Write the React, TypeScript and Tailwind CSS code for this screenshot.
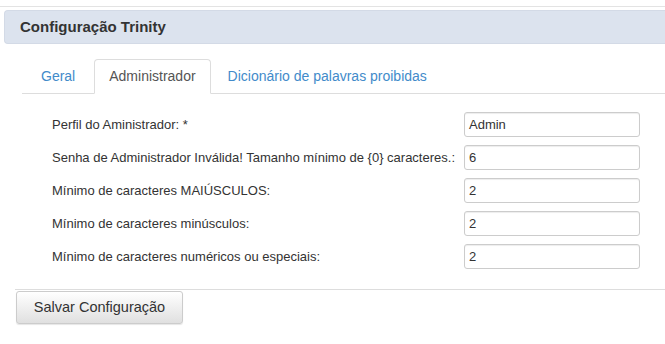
import React from "react";

const rows = [
  { label: "Perfil do Aministrador: *", value: "Admin" },
  { label: "Senha de Administrador Inválida! Tamanho mínimo de {0} caracteres.:", value: "6" },
  { label: "Mínimo de caracteres MAIÚSCULOS:", value: "2" },
  { label: "Mínimo de caracteres minúsculos:", value: "2" },
  { label: "Mínimo de caracteres numéricos ou especiais:", value: "2" },
];

export default function App() {
  return (
    <div className="w-[665px] h-[344px] bg-white overflow-hidden text-[#333] font-['Liberation_Sans',Arial,sans-serif]">
      <div className="mt-[6px] border-t border-[#e3e3e3] pt-[3px] pl-[4px]">
        {/* header */}
        <div className="h-[34px] bg-[#dce3ee] border border-[#d3dae6] rounded-l-[4px] border-r-0 flex items-center pl-[15px]">
          <span className="text-[15px] font-bold">Configuração Trinity</span>
        </div>

        {/* tabs */}
        <div className="mt-[15px] ml-[18px] flex items-end border-b border-[#ddd] h-[35px] text-[14px]">
          <div className="px-[19px] h-[34px] flex items-center text-[#428bca]">Geral</div>
          <div className="px-[14px] h-[35px] -mb-px flex items-center bg-white border border-[#ddd] border-b-white rounded-t-[4px] text-[#555]">
            Administrador
          </div>
          <div className="px-[17px] h-[34px] flex items-center text-[#428bca]">Dicionário de palavras proibidas</div>
        </div>

        {/* form */}
        <div className="mt-[18px] flex flex-col gap-[8px]">
          {rows.map((r) => (
            <div key={r.label} className="flex items-center h-[25px]">
              <div className="w-[460px] pl-[48px] text-[13px]">{r.label}</div>
              <div className="w-[176px] h-[25px] border border-[#ccc] rounded-[3px] shadow-[inset_0_1px_1px_rgba(0,0,0,0.075)] flex items-center px-[4px] text-[13px]">
                {r.value}
              </div>
            </div>
          ))}
        </div>

        <div className="mt-[20px] ml-[11px] border-t border-[#ddd] pt-px">
          <button className="ml-[1px] h-[33px] w-[167px] rounded-[3px] border border-[#ccc] bg-gradient-to-b from-white to-[#e0e0e0] shadow-[0_1px_1px_rgba(0,0,0,0.1)] text-[14.5px] text-[#333]">
            Salvar Configuração
          </button>
        </div>
      </div>
    </div>
  );
}
